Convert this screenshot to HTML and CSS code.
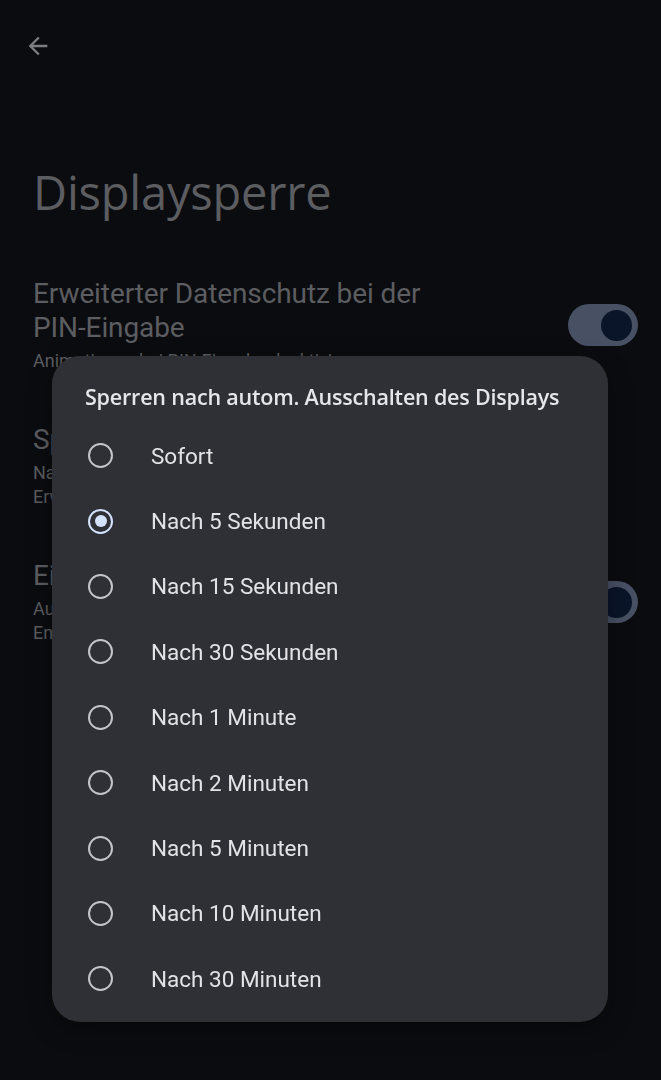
FILE: index.html
```html
<!DOCTYPE html>
<html lang="de">
<head>
    <meta charset="UTF-8">
    <meta name="viewport" content="width=device-width, initial-scale=1.0">
    <title>Displaysperre</title>
    <link rel="stylesheet" href="styles.css">
</head>
<body>

<!-- Seite hinter dem Dialog -->
<div class="page">
    <div class="topbar">
        <svg class="back" viewBox="0 0 24 24" width="28" height="28">
            <path d="M20 11H7.83l5.59-5.59L12 4l-8 8 8 8 1.41-1.41L7.83 13H20v-2z"/>
        </svg>
    </div>

    <h1 class="page-title">Displaysperre</h1>

    <div class="setting">
        <div class="setting-text">
            <div class="setting-title">Erweiterter Datenschutz bei der<br>PIN-Eingabe</div>
            <div class="setting-sub">Animationen bei PIN-Eingabe deaktivieren</div>
        </div>
        <div class="switch"><span class="thumb"></span></div>
    </div>

    <div class="setting">
        <div class="setting-text">
            <div class="setting-title">Sperren nach Display-Zeitlimit</div>
            <div class="setting-sub">Nach 5 Sekunden, außer wenn das Gerät durch<br>Erweitertes Entsperren entsperrt bleibt</div>
        </div>
    </div>

    <div class="setting">
        <div class="setting-text">
            <div class="setting-title">Ein/Aus-Taste sperrt sofort</div>
            <div class="setting-sub">Außer wenn das Gerät durch Erweitertes<br>Entsperren entsperrt bleibt</div>
        </div>
        <div class="switch"><span class="thumb"></span></div>
    </div>
</div>

<!-- Auswahldialog -->
<div class="overlay">
    <div class="dialog">
        <h2 class="dialog-title">Sperren nach autom. Ausschalten des Displays</h2>
        <ul class="options">
            <li class="option"><span class="radio"></span>Sofort</li>
            <li class="option checked"><span class="radio"></span>Nach 5 Sekunden</li>
            <li class="option"><span class="radio"></span>Nach 15 Sekunden</li>
            <li class="option"><span class="radio"></span>Nach 30 Sekunden</li>
            <li class="option"><span class="radio"></span>Nach 1 Minute</li>
            <li class="option"><span class="radio"></span>Nach 2 Minuten</li>
            <li class="option"><span class="radio"></span>Nach 5 Minuten</li>
            <li class="option"><span class="radio"></span>Nach 10 Minuten</li>
            <li class="option"><span class="radio"></span>Nach 30 Minuten</li>
        </ul>
    </div>
</div>

</body>
</html>
```

FILE: styles.css
```css
/* Grundlegende Stile */
body {
    margin: 0;
    padding: 0;
    background-color: #0b0c0f;
    font-family: 'Roboto', sans-serif;
    color: #5c5d61;
    overflow: hidden;
}

.page {
    height: 1080px;
}

.topbar {
    height: 92px;
    padding-left: 24px;
    display: flex;
    align-items: center;
}

.back {
    fill: #7d7e82;
}

.page-title {
    margin: 70px 0 30px 33px;
    font-family: 'Open Sans', sans-serif;
    font-weight: 400;
    font-size: 47px;
    line-height: 60px;
    letter-spacing: -0.2px;
}

/* Einstellungszeilen */
.setting {
    display: flex;
    align-items: center;
    padding: 25px 23px 25px 33px;
}

.setting-text {
    flex: 1;
    padding-right: 40px;
}

.setting-title {
    font-size: 28px;
    line-height: 34px;
    letter-spacing: -0.1px;
}

.setting-sub {
    font-size: 18px;
    line-height: 24px;
    margin-top: 4px;
}

.switch {
    width: 70px;
    height: 42px;
    border-radius: 21px;
    background-color: #485064;
    display: flex;
    align-items: center;
    justify-content: flex-end;
    padding: 0 6px;
    box-sizing: border-box;
}

.thumb {
    width: 31px;
    height: 31px;
    border-radius: 50%;
    background-color: #0a1529;
}

/* Dialog */
.overlay {
    position: fixed;
    top: 0;
    left: 0;
    right: 0;
    bottom: 0;
    padding: 356px 53px 0 52px;
}

.dialog {
    background-color: #2f3035;
    border-radius: 28px;
    padding: 27px 0 10px 0;
    box-shadow: 0 8px 24px rgba(0, 0, 0, 0.35);
}

.dialog-title {
    margin: 0 0 12px 33px;
    font-family: 'Open Sans', sans-serif;
    font-weight: 600;
    font-size: 21.5px;
    line-height: 28px;
    color: #e6e6ea;
    letter-spacing: -0.2px;
}

.options {
    list-style: none;
    margin: 0;
    padding: 0;
}

.option {
    height: 65.4px;
    display: flex;
    align-items: center;
    padding-left: 36px;
    font-size: 22.5px;
    color: #e3e3e7;
}

.radio {
    width: 25px;
    height: 25px;
    border: 2.5px solid #c3c5ca;
    border-radius: 50%;
    box-sizing: border-box;
    margin-right: 38px;
    display: flex;
    align-items: center;
    justify-content: center;
}

.option.checked .radio {
    border-color: #d3e3fd;
}

.option.checked .radio::after {
    content: "";
    width: 12px;
    height: 12px;
    border-radius: 50%;
    background-color: #d3e3fd;
}
```
